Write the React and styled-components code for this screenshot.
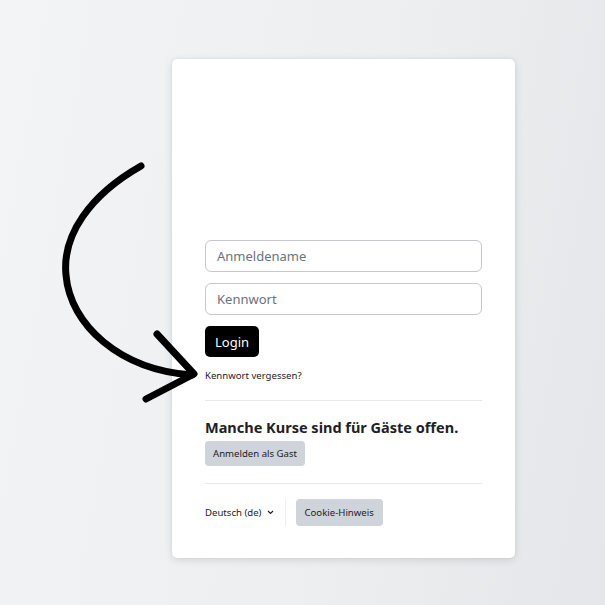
import React from 'react';
import styled, { createGlobalStyle } from 'styled-components';

const GlobalStyle = createGlobalStyle`
  html, body {
    margin: 0;
    padding: 0;
  }
  body {
    font-family: "Noto Sans", "Open Sans", sans-serif;
    color: #1d2125;
  }
`;

const Page = styled.div`
  position: relative;
  width: 605px;
  height: 605px;
  overflow: hidden;
  background: linear-gradient(100deg, #f3f4f6 0%, #eceef0 60%, #e4e6e9 100%);
  padding: 59px 0 0 172px;
  box-sizing: border-box;
`;

const Card = styled.div`
  width: 343px;
  height: 499px;
  box-sizing: border-box;
  background: #fff;
  border-radius: 5px;
  box-shadow: 0 2px 8px rgba(0, 0, 0, 0.12), 0 0 2px rgba(0, 0, 0, 0.08);
  padding: 181px 33px 0 33px;
  display: flex;
  flex-direction: column;
`;

const Input = styled.div`
  height: 32px;
  box-sizing: border-box;
  border: 1px solid #c4c7cb;
  border-radius: 6px;
  display: flex;
  align-items: center;
  padding: 0 11px;
  font-size: 13px;
  color: #6a737b;
  margin-bottom: 11px;
`;

const LoginButton = styled.button`
  align-self: flex-start;
  height: 31px;
  width: 54px;
  border: none;
  border-radius: 5px;
  background: #000;
  color: #fff;
  font-family: inherit;
  font-size: 13px;
  padding: 0;
`;

const ForgotLink = styled.div`
  font-size: 9.6px;
  line-height: 14px;
  margin-top: 12px;
  color: #1d2125;
`;

const Divider = styled.hr`
  border: none;
  border-top: 1px solid #e6e8ea;
  margin: ${p => p.$top}px 0 0 0;
  width: 100%;
`;

const Heading = styled.h2`
  margin: 16px 0 0 0;
  font-size: 14.5px;
  font-weight: 700;
  line-height: 20px;
  color: #1d2125;
`;

const GrayButton = styled.button`
  align-self: flex-start;
  border: none;
  border-radius: 4px;
  background: #ced4da;
  color: #1d2125;
  font-family: inherit;
  font-size: 9.6px;
  height: ${p => p.$h}px;
  padding: 0 ${p => p.$px}px;
`;

const GuestButton = styled(GrayButton)`
  margin-top: 4px;
`;

const Footer = styled.div`
  display: flex;
  align-items: center;
  margin-top: 15px;
`;

const Lang = styled.div`
  display: flex;
  align-items: center;
  gap: 5px;
  font-size: 9.6px;
  padding-right: 11px;
  height: 27px;
  border-right: 1px solid #eceef0;
  margin-right: 10px;
`;

const ArrowSvg = styled.svg`
  position: absolute;
  left: 0;
  top: 0;
  pointer-events: none;
`;

export default function App() {
  return (
    <Page>
      <GlobalStyle />
      <Card>
        <Input>Anmeldename</Input>
        <Input>Kennwort</Input>
        <LoginButton>Login</LoginButton>
        <ForgotLink>Kennwort vergessen?</ForgotLink>
        <Divider $top={17} />
        <Heading>Manche Kurse sind für Gäste offen.</Heading>
        <GuestButton $h={25} $px={8}>Anmelden als Gast</GuestButton>
        <Divider $top={17} />
        <Footer>
          <Lang>
            Deutsch (de)
            <svg width="7" height="5" viewBox="0 0 7 5">
              <path d="M1 1 L3.5 3.5 L6 1" fill="none" stroke="#1d2125" strokeWidth="1.2" />
            </svg>
          </Lang>
          <GrayButton $h={27} $px={9}>Cookie-Hinweis</GrayButton>
        </Footer>
      </Card>
      <ArrowSvg width="605" height="605" viewBox="0 0 605 605">
        <path
          d="M141 166 C 90 195, 62 235, 66 275 C 70 325, 120 370, 192 375"
          fill="none"
          stroke="#000"
          strokeWidth="7"
          strokeLinecap="round"
        />
        <path
          d="M157 334 L194 374 L146 399"
          fill="none"
          stroke="#000"
          strokeWidth="7"
          strokeLinecap="round"
          strokeLinejoin="round"
        />
      </ArrowSvg>
    </Page>
  );
}
